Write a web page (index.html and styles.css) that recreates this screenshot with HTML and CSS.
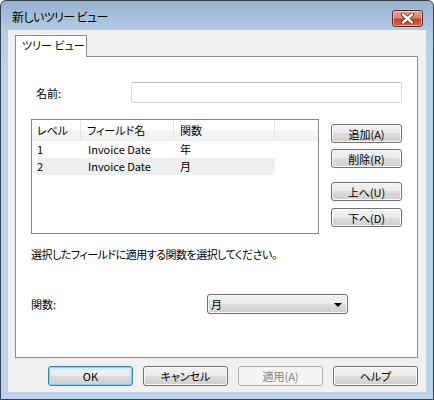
FILE: index.html
```html
<!DOCTYPE html>
<html lang="ja">
<head>
<meta charset="utf-8">
<title>新しいツリー ビュー</title>
<link rel="stylesheet" href="styles.css">
</head>
<body>
<div class="window">
  <div class="titlebar">
    <span class="title">新しいツリー ビュー</span>
    <div class="close">
      <svg width="15" height="11" viewBox="0 0 15 11">
        <path d="M3 1.5 L12 9.5 M12 1.5 L3 9.5" stroke="#6b2a20" stroke-width="4.2" stroke-linecap="round" fill="none"/>
        <path d="M3 1.5 L12 9.5 M12 1.5 L3 9.5" stroke="#ffffff" stroke-width="2.4" stroke-linecap="round" fill="none"/>
      </svg>
    </div>
  </div>
  <div class="client">
    <div class="tabs"><div class="tab">ツリー ビュー</div></div>
    <div class="panel">
      <div class="name-row">
        <span class="lbl name-lbl">名前:</span>
        <div class="textbox"></div>
      </div>
      <div class="list-row">
        <div class="listview">
          <div class="lv-header">
            <div class="hc hc1">レベル</div>
            <div class="hc hc2">フィールド名</div>
            <div class="hc hc3">関数</div>
            <div class="hc hc4"></div>
          </div>
          <div class="lv-body">
            <div class="lv-row"><span class="c1">1</span><span class="c2">Invoice Date</span><span class="c3">年</span></div>
            <div class="lv-row selected"><span class="c1">2</span><span class="c2">Invoice Date</span><span class="c3">月</span></div>
          </div>
        </div>
        <div class="side-buttons">
          <div class="btn side b-add">追加(A)</div>
          <div class="btn side b-del">削除(R)</div>
          <div class="btn side b-up">上へ(U)</div>
          <div class="btn side b-down">下へ(D)</div>
        </div>
      </div>
      <p class="hint">選択したフィールドに適用する関数を選択してください。</p>
      <div class="func-row">
        <span class="lbl func-lbl">関数:</span>
        <div class="combo"><span class="combo-text">月</span><span class="arrow"></span></div>
      </div>
    </div>
    <div class="footer">
      <div class="btn foot default">OK</div>
      <div class="btn foot">キャンセル</div>
      <div class="btn foot disabled">適用(A)</div>
      <div class="btn foot">ヘルプ</div>
    </div>
  </div>
</div>
</body>
</html>
```

FILE: styles.css
```css
* { box-sizing: border-box; }
html, body { margin: 0; padding: 0; background: #ffffff; }
body {
  font-family: "Noto Sans CJK JP", "Liberation Sans", sans-serif;
  font-size: 11px;
  font-feature-settings: "palt";
  color: #000;
  white-space: nowrap;
}
.window {
  width: 434px;
  height: 400px;
  border: 1px solid #34404c;
  border-radius: 6px 6px 0 0;
  background: linear-gradient(to bottom, #98b2d0 0px, #b4cbe4 30px, #bcd3eb 60px, #bcd3eb 100%);
  display: flex;
  flex-direction: column;
  overflow: hidden;
}
.titlebar {
  height: 29px;
  display: flex;
  align-items: flex-start;
  padding-left: 11px;
  padding-right: 10px;
}
.title {
  flex: 1;
  line-height: 14px;
  padding-top: 9px;
  font-size: 12px;
  letter-spacing: -0.6px;
  color: #000;
}
.close {
  margin-top: 9px;
  width: 31px;
  height: 17px;
  border: 1px solid #5c2a22;
  border-radius: 3px;
  background: linear-gradient(to bottom, #e8a494 0%, #d98470 45%, #c4452e 55%, #d0634a 100%);
  box-shadow: inset 0 0 0 1px rgba(255, 210, 200, 0.6);
  display: flex;
  align-items: center;
  justify-content: center;
}
.client {
  flex: 1;
  margin: 0 7px 7px 7px;
  background: #f0f0f0;
  padding: 5px 8px 0 7px;
  display: flex;
  flex-direction: column;
}
.tabs { display: flex; }
.tab {
  position: relative;
  z-index: 1;
  width: 72px;
  height: 22px;
  margin-bottom: -1px;
  background: #ffffff;
  border: 1px solid #898c95;
  border-bottom: none;
  padding-left: 6px;
  line-height: 19px;
}
.panel {
  height: 302px;
  background: #ffffff;
  border: 1px solid #898c95;
}
.lbl { line-height: 14px; }
.name-row {
  margin-top: 25px;
  padding-left: 20px;
  display: flex;
  align-items: center;
}
.name-lbl { width: 95px; }
.textbox {
  width: 271px;
  height: 21px;
  border: 1px solid #d6d9de;
  border-top-color: #b7b9bd;
  border-radius: 2px;
  background: #fff;
}
.list-row {
  margin-top: 16px;
  padding-left: 15px;
  display: flex;
  align-items: flex-start;
}
.listview {
  width: 288px;
  height: 115px;
  border: 1px solid #828790;
  background: #fff;
}
.lv-header {
  height: 21px;
  display: flex;
  background: linear-gradient(to bottom, #ffffff 0%, #ffffff 50%, #f6f7f8 50%, #f1f2f3 100%);
  border-bottom: 1px solid #f0f0f0;
}
.hc {
  border-right: 1px solid #e3e5e7;
  line-height: 21px;
  padding-left: 6px;
}
.hc1 { width: 49px; padding-left: 5px; }
.hc2 { width: 93px; }
.hc3 { width: 101px; }
.hc4 { width: 42px; border-right: none; }
.lv-row {
  margin-left: 5px;
  width: 238px;
  height: 17px;
  display: flex;
  line-height: 17px;
}
.lv-row.selected { background: #efefef; }
.c1 { width: 51px; }
.c2 { width: 92px; }
.c3 { flex: 1; }
.side-buttons {
  margin-left: 12px;
  padding-top: 5px;
  width: 71px;
  display: flex;
  flex-direction: column;
}
.btn {
  display: flex;
  align-items: center;
  justify-content: center;
  border: 1px solid #707070;
  border-radius: 3px;
  background: linear-gradient(to bottom, #f2f2f2 0%, #ebebeb 50%, #dddddd 50%, #cfcfcf 100%);
  box-shadow: inset 0 0 0 1px #fbfbfb;
  line-height: 14px;
  color: #000;
}
.side { height: 19px; }
.b-del { margin-top: 6px; }
.b-up { margin-top: 14px; }
.b-down { margin-top: 7px; }
.hint {
  margin: 13px 0 0 0;
  padding-left: 15px;
  line-height: 14px;
  letter-spacing: -0.5px;
}
.func-row {
  margin-top: 33px;
  padding-left: 15px;
  display: flex;
  align-items: center;
}
.func-lbl { width: 176px; }
.combo {
  width: 141px;
  height: 20px;
  display: flex;
  align-items: center;
  border: 1px solid #707070;
  border-radius: 3px;
  background: linear-gradient(to bottom, #f2f2f2 0%, #ebebeb 50%, #dddddd 50%, #cfcfcf 100%);
  box-shadow: inset 0 0 0 1px #fbfbfb;
  padding-left: 3px;
  padding-right: 5px;
}
.combo-text { flex: 1; line-height: 14px; }
.arrow {
  width: 0;
  height: 0;
  border-left: 4px solid transparent;
  border-right: 4px solid transparent;
  border-top: 4px solid #000;
  margin-top: 1px;
}
.footer {
  margin-top: 8px;
  display: flex;
  justify-content: flex-end;
  gap: 10px;
}
.foot { width: 85px; height: 20px; }
.default {
  border-color: #3c7fb1;
  box-shadow: inset 0 0 0 1px #7fd3f7, inset 0 0 2px 2px rgba(160, 225, 250, 0.6);
}
.disabled {
  border-color: #adb2b5;
  background: #f4f4f4;
  box-shadow: none;
  color: #838383;
}
```
